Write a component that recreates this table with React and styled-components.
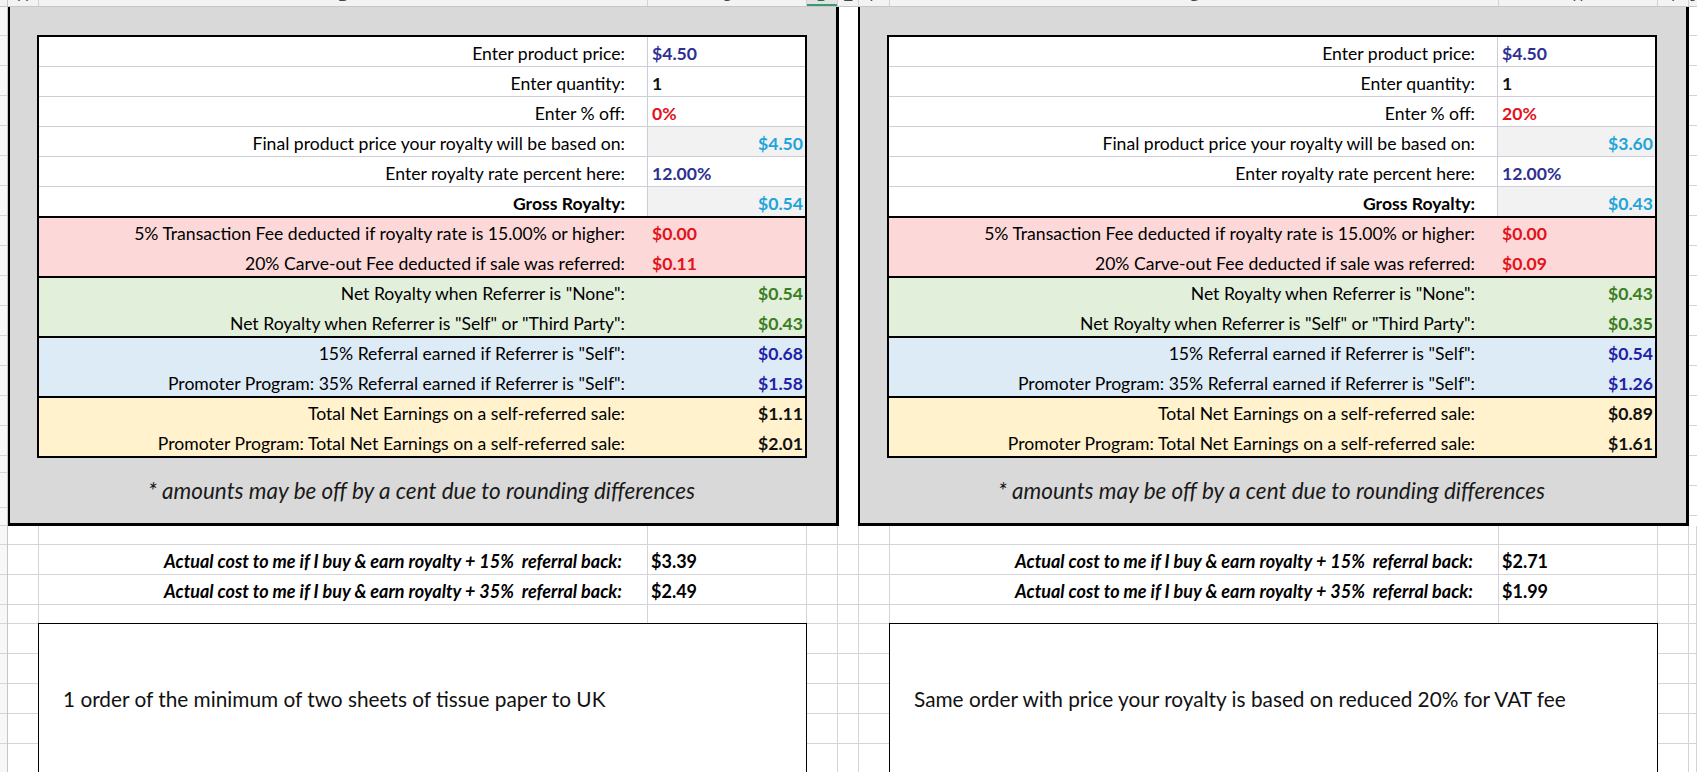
import React from "react";
import styled, { createGlobalStyle } from "styled-components";

const GlobalStyle = createGlobalStyle`
  html, body {
    margin: 0;
    padding: 0;
    background: #fff;
  }
  body {
    font-family: Lato, "Open Sans", sans-serif;
    color: #000;
  }
`;

const GRID = "#d4d4d8";
const HEADER_BG = "#f3f3f3";

const BG = {
  white: "#ffffff",
  pink: "#fcd9d8",
  green: "#e2efda",
  blue: "#ddebf7",
  yellow: "#fff2cc",
};

const INK = {
  navy: "#2e3192",
  black: "#111111",
  red: "#e3121b",
  cyan: "#1fa5da",
  green: "#3b7d23",
  blue: "#1f21a8",
};

// sheet columns A..I, the last one (J) takes the rest
const COLUMNS = [
  { id: "A", w: 31 },
  { id: "B", w: 609 },
  { id: "C", w: 159 },
  { id: "D", w: 31, active: true },
  { id: "E", w: 21 },
  { id: "F", w: 31 },
  { id: "G", w: 609 },
  { id: "H", w: 159 },
  { id: "I", w: 31 },
  { id: "J", w: 9 },
];

const ROW_HEIGHTS = [
  29, 30, 30, 30, 30, 30, 30, 30, 30, 30, 30, 30, 30, 30, 30, 17, 35, 18, 19,
  30, 30, 19, 30, 30, 30, 30, 30,
];

const LOWER_ROWS = [19, 30, 30, 19, 30, 30, 30, 30, 30];

const calculators = [
  {
    sections: [
      {
        tone: "white",
        rows: [
          { label: "Enter product price:", value: "$4.50", ink: "navy" },
          { label: "Enter quantity:", value: "1", ink: "black" },
          { label: "Enter % off:", value: "0%", ink: "red" },
          {
            label: "Final product price your royalty will be based on:",
            value: "$4.50",
            ink: "cyan",
            right: true,
            shaded: true,
          },
          { label: "Enter royalty rate percent here:", value: "12.00%", ink: "navy" },
          { label: "Gross Royalty:", value: "$0.54", ink: "cyan", right: true, shaded: true, strong: true },
        ],
      },
      {
        tone: "pink",
        rows: [
          { label: "5% Transaction Fee deducted if royalty rate is 15.00% or higher:", value: "$0.00", ink: "red" },
          { label: "20% Carve-out Fee deducted if sale was referred:", value: "$0.11", ink: "red" },
        ],
      },
      {
        tone: "green",
        rows: [
          { label: 'Net Royalty when Referrer is "None":', value: "$0.54", ink: "green", right: true },
          { label: 'Net Royalty when Referrer is "Self" or "Third Party":', value: "$0.43", ink: "green", right: true },
        ],
      },
      {
        tone: "blue",
        rows: [
          { label: '15% Referral earned if Referrer is "Self":', value: "$0.68", ink: "blue", right: true },
          { label: 'Promoter Program: 35% Referral earned if Referrer is "Self":', value: "$1.58", ink: "blue", right: true },
        ],
      },
      {
        tone: "yellow",
        rows: [
          { label: "Total Net Earnings on a self-referred sale:", value: "$1.11", ink: "black", right: true },
          { label: "Promoter Program: Total Net Earnings on a self-referred sale:", value: "$2.01", ink: "black", right: true },
        ],
      },
    ],
    costs: ["$3.39", "$2.49"],
    note: "1 order of the minimum of two sheets of tissue paper to UK",
  },
  {
    sections: [
      {
        tone: "white",
        rows: [
          { label: "Enter product price:", value: "$4.50", ink: "navy" },
          { label: "Enter quantity:", value: "1", ink: "black" },
          { label: "Enter % off:", value: "20%", ink: "red" },
          {
            label: "Final product price your royalty will be based on:",
            value: "$3.60",
            ink: "cyan",
            right: true,
            shaded: true,
          },
          { label: "Enter royalty rate percent here:", value: "12.00%", ink: "navy" },
          { label: "Gross Royalty:", value: "$0.43", ink: "cyan", right: true, shaded: true, strong: true },
        ],
      },
      {
        tone: "pink",
        rows: [
          { label: "5% Transaction Fee deducted if royalty rate is 15.00% or higher:", value: "$0.00", ink: "red" },
          { label: "20% Carve-out Fee deducted if sale was referred:", value: "$0.09", ink: "red" },
        ],
      },
      {
        tone: "green",
        rows: [
          { label: 'Net Royalty when Referrer is "None":', value: "$0.43", ink: "green", right: true },
          { label: 'Net Royalty when Referrer is "Self" or "Third Party":', value: "$0.35", ink: "green", right: true },
        ],
      },
      {
        tone: "blue",
        rows: [
          { label: '15% Referral earned if Referrer is "Self":', value: "$0.54", ink: "blue", right: true },
          { label: 'Promoter Program: 35% Referral earned if Referrer is "Self":', value: "$1.26", ink: "blue", right: true },
        ],
      },
      {
        tone: "yellow",
        rows: [
          { label: "Total Net Earnings on a self-referred sale:", value: "$0.89", ink: "black", right: true },
          { label: "Promoter Program: Total Net Earnings on a self-referred sale:", value: "$1.61", ink: "black", right: true },
        ],
      },
    ],
    costs: ["$2.71", "$1.99"],
    note: "Same order with price your royalty is based on reduced 20% for VAT fee",
  },
];

const COST_LABELS = [
  "Actual cost to me if I buy & earn royalty + 15%\u00a0 referral back:",
  "Actual cost to me if I buy & earn royalty + 35%\u00a0 referral back:",
];

/* ---------- frame of the sheet ---------- */

const Page = styled.div`
  width: 1697px;
  height: 772px;
  overflow: hidden;
  display: flex;
  flex-direction: column;
  background: #fff;
`;

const ColumnHeader = styled.div`
  flex: none;
  height: 7px;
  display: flex;
  overflow: hidden;
  box-sizing: border-box;
  background: ${HEADER_BG};
  border-bottom: 1px solid #c6c6c6;
`;

const Corner = styled.div`
  flex: none;
  width: 8px;
  box-sizing: border-box;
  border-right: 1px solid #c6c6c6;
`;

const HeaderCell = styled.div`
  flex: none;
  width: ${(p) => p.$w}px;
  box-sizing: border-box;
  display: flex;
  align-items: flex-end;
  justify-content: center;
  padding-bottom: 3px;
  border-right: 1px solid #d2d2d2;
  background: ${(p) => (p.$active ? "#e2e2e2" : "transparent")};
  box-shadow: ${(p) => (p.$active ? "inset 0 -2px 0 #3c9a6c" : "none")};
  color: ${(p) => (p.$active ? "#217346" : "#444")};
  font: 15px/15px "Liberation Sans", Arial, sans-serif;
`;

const Body = styled.div`
  flex: 1;
  display: flex;
  min-height: 0;
`;

const RowHeader = styled.div`
  flex: none;
  width: 8px;
  display: flex;
  flex-direction: column;
  box-sizing: border-box;
  background: #f7f7f7;
  border-right: 1px solid #c4c4cc;
`;

const RowHeaderCell = styled.div`
  flex: none;
  height: ${(p) => p.$h}px;
  box-sizing: border-box;
  border-bottom: 1px solid #d6d6d6;
`;

const Sheet = styled.div`
  flex: 1;
  display: flex;
  flex-direction: column;
  min-width: 0;
`;

const TopArea = styled.div`
  flex: none;
  height: 519px;
  display: flex;
`;

const PanelGap = styled.div`
  flex: none;
  width: 19px;
  background: #fff;
`;

const Gutter = styled.div`
  flex: 1;
  background: repeating-linear-gradient(
    to bottom,
    transparent 0 28px,
    ${GRID} 28px 29px,
    transparent 29px 30px
  );
`;

/* ---------- calculator panel ---------- */

const Panel = styled.section`
  flex: none;
  width: 831px;
  box-sizing: border-box;
  display: flex;
  flex-direction: column;
  padding: 28px 0 0 27px;
  background: #d9d9d9;
  border: 3px solid #000;
  border-left-width: 2px;
  border-top: none;
`;

const Table = styled.div`
  width: 770px;
  box-sizing: border-box;
  border: 2px solid #000;
  display: flex;
  flex-direction: column;
`;

const Section = styled.div`
  height: ${(p) => p.$h}px;
  box-sizing: border-box;
  display: flex;
  flex-direction: column;
  background: ${(p) => BG[p.$tone]};
  border-top: ${(p) => (p.$first ? "none" : "2px solid #000")};
`;

const Row = styled.div`
  flex: 1;
  display: grid;
  grid-template-columns: 608px 158px;
  box-sizing: border-box;
  border-bottom: 1px solid ${(p) => (p.$lined ? "#cdcdd8" : "transparent")};

  &:last-child {
    border-bottom: none;
  }
`;

const Label = styled.div`
  display: flex;
  align-items: center;
  justify-content: flex-end;
  padding: 3px 22px 0 0;
  font-size: 17.6px;
  font-weight: ${(p) => (p.$strong ? 700 : 400)};
  white-space: nowrap;
`;

const Value = styled.div`
  display: flex;
  align-items: center;
  justify-content: ${(p) => (p.$right ? "flex-end" : "flex-start")};
  padding: 3px ${(p) => (p.$right ? "2px" : "0")} 0 ${(p) => (p.$right ? "0" : "4px")};
  font-size: 17.6px;
  font-weight: 700;
  color: ${(p) => INK[p.$ink]};
  background: ${(p) => (p.$shaded ? "#f2f2f2" : "transparent")};
  border-left: 1px solid ${(p) => (p.$lined ? "#cdcdd8" : "transparent")};
`;

const Footnote = styled.p`
  flex: 1;
  margin: 0;
  display: flex;
  align-items: center;
  justify-content: center;
  padding: 0 30px 0 0;
  font-size: 22.5px;
  font-style: italic;
  color: #1a1a1a;
`;

/* ---------- cells under the panels ---------- */

const LowerGrid = styled.div`
  flex: 1;
  display: grid;
  grid-template-columns: ${COLUMNS.slice(0, -1)
      .map((c) => `${c.w}px`)
      .join(" ")} 1fr;
  grid-template-rows: ${LOWER_ROWS.map((h) => `${h}px`).join(" ")};
  overflow: hidden;
`;

const GridCell = styled.div`
  box-sizing: border-box;
  border-right: 1px solid ${GRID};
  border-bottom: 1px solid ${GRID};
  display: flex;
  align-items: center;
  min-width: 0;
  white-space: nowrap;
`;

const CostLabel = styled(GridCell)`
  justify-content: flex-end;
  padding: 2px 25px 0 0;
  font-size: 18px;
  font-weight: 700;
  font-style: italic;
`;

const CostValue = styled(GridCell)`
  padding: 2px 0 0 3px;
  font-size: 18px;
  font-weight: 700;
`;

const NoteBox = styled.div`
  grid-row: 5 / span 5;
  grid-column: ${(p) => p.$col} / span 2;
  margin: -1px 0 0 -1px;
  box-sizing: border-box;
  background: #fff;
  border: 1px solid #000;
  padding: 62px 0 0 24px;
  font-size: 20.8px;
  color: #111;
  white-space: nowrap;
`;

function Calculator({ sections }) {
  return (
    <Panel>
      <Table>
        {sections.map((section, i) => (
          <Section
            key={section.tone}
            $tone={section.tone}
            $first={i === 0}
            $h={i === 0 ? 179 : 60}
          >
            {section.rows.map((row) => {
              const lined = section.tone === "white";
              return (
                <Row key={row.label} $lined={lined}>
                  <Label $strong={row.strong}>{row.label}</Label>
                  <Value
                    $ink={row.ink}
                    $right={row.right}
                    $shaded={row.shaded}
                    $lined={lined}
                  >
                    {row.value}
                  </Value>
                </Row>
              );
            })}
          </Section>
        ))}
      </Table>
      <Footnote>* amounts may be off by a cent due to rounding differences</Footnote>
    </Panel>
  );
}

// columns 2..3 and 7..8 (1-based) hold a calculator's label and value
const BLOCKS = [
  { label: 1, value: 2 },
  { label: 6, value: 7 },
];

function LowerCells() {
  const cells = [];
  LOWER_ROWS.forEach((_, r) => {
    COLUMNS.forEach((col, c) => {
      const block = BLOCKS.findIndex((b) => b.label === c || b.value === c);
      if (r >= 4 && block !== -1) return; // covered by the note box
      const key = `${r}-${col.id}`;
      if (block !== -1 && (r === 1 || r === 2)) {
        if (BLOCKS[block].label === c) {
          cells.push(<CostLabel key={key}>{COST_LABELS[r - 1]}</CostLabel>);
        } else {
          cells.push(
            <CostValue key={key}>{calculators[block].costs[r - 1]}</CostValue>
          );
        }
        return;
      }
      cells.push(<GridCell key={key} />);
    });
  });
  return cells;
}

export default function App() {
  return (
    <Page>
      <GlobalStyle />
      <ColumnHeader>
        <Corner />
        {COLUMNS.map((col) => (
          <HeaderCell key={col.id} $w={col.w} $active={col.active}>
            {col.id}
          </HeaderCell>
        ))}
      </ColumnHeader>
      <Body>
        <RowHeader>
          {ROW_HEIGHTS.map((h, i) => (
            <RowHeaderCell key={i} $h={h} />
          ))}
        </RowHeader>
        <Sheet>
          <TopArea>
            <Calculator sections={calculators[0].sections} />
            <PanelGap />
            <Calculator sections={calculators[1].sections} />
            <Gutter />
          </TopArea>
          <LowerGrid>
            <LowerCells />
            <NoteBox $col={2}>{calculators[0].note}</NoteBox>
            <NoteBox $col={7}>{calculators[1].note}</NoteBox>
          </LowerGrid>
        </Sheet>
      </Body>
    </Page>
  );
}
